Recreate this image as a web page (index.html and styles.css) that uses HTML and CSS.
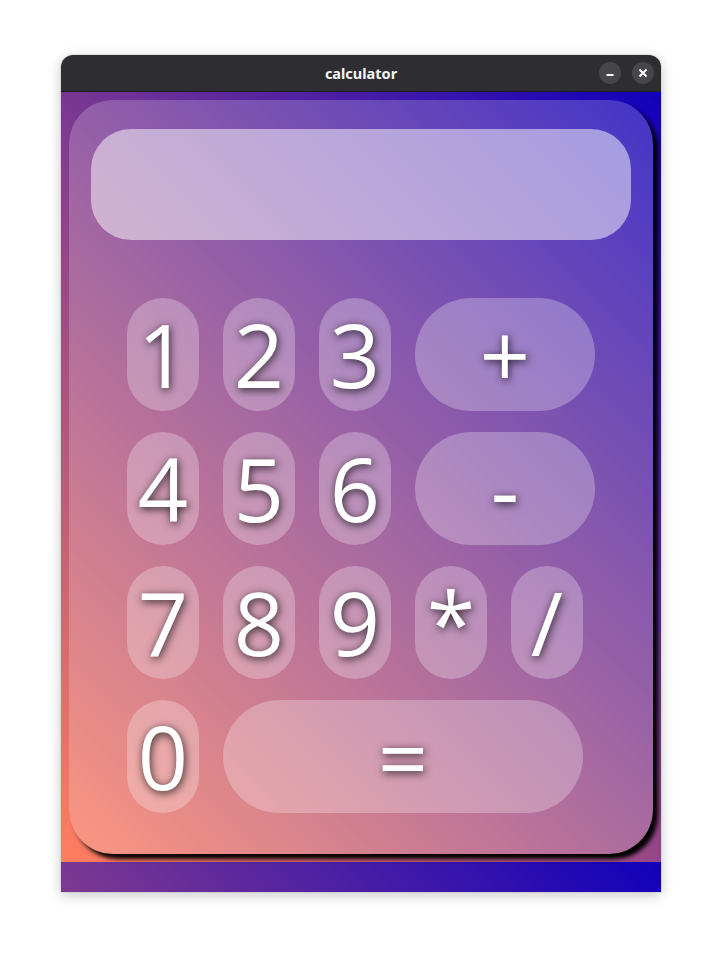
FILE: index.html
```html
<!DOCTYPE html>
<html>
<head>
<meta charset="utf-8">
<link rel="stylesheet" href="styles.css">
</head>
<body>
<div class="desk">
  <div class="window">
    <div class="titlebar">
      <span class="title">calculator</span>
      <div class="controls">
        <span class="ctl"><svg width="22" height="22" viewBox="0 0 22 22"><rect x="7.5" y="12" width="7" height="2" fill="#fff"/></svg></span>
        <span class="ctl"><svg width="22" height="22" viewBox="0 0 22 22"><path d="M7.5 7.5 L14.5 14.5 M14.5 7.5 L7.5 14.5" stroke="#fff" stroke-width="2"/></svg></span>
      </div>
    </div>
    <div class="viewport">
      <div class="card">
        <div class="display"></div>
        <div class="keys">
          <div class="row">
            <button class="key">1</button>
            <button class="key">2</button>
            <button class="key">3</button>
            <button class="key wide">+</button>
          </div>
          <div class="row">
            <button class="key">4</button>
            <button class="key">5</button>
            <button class="key">6</button>
            <button class="key wide">-</button>
          </div>
          <div class="row">
            <button class="key">7</button>
            <button class="key">8</button>
            <button class="key">9</button>
            <button class="key">*</button>
            <button class="key">/</button>
          </div>
          <div class="row">
            <button class="key">0</button>
            <button class="key equals">=</button>
          </div>
        </div>
      </div>
    </div>
  </div>
</div>
</body>
</html>
```

FILE: styles.css
```css
html, body {
  margin: 0;
  padding: 0;
  background: #ffffff;
}

.desk {
  padding: 55px 61px 67px 61px;
}

.window {
  width: 600px;
  border-radius: 12px 12px 0 0;
  overflow: hidden;
  box-shadow: 0 3px 14px rgba(0, 0, 0, 0.22), 0 0 0 1px rgba(0, 0, 0, 0.06);
}

.titlebar {
  height: 36px;
  background: #2e2e32;
  border-bottom: 1px solid #1f1f22;
  display: flex;
  align-items: center;
  justify-content: center;
  position: relative;
}

.title {
  font-family: "Noto Sans", "Open Sans", sans-serif;
  font-weight: 700;
  font-size: 14.5px;
  color: #f6f6f6;
}

.controls {
  position: absolute;
  right: 7px;
  top: 7px;
  display: flex;
  gap: 11px;
}

.ctl {
  width: 22px;
  height: 22px;
  border-radius: 50%;
  background: #46464b;
  display: flex;
}

.viewport {
  height: 800px;
  background: linear-gradient(45deg, #ff7e5f, #1100bb) 0 0 / 600px 770px repeat;
  padding-top: 8px;
  box-sizing: border-box;
}

.card {
  margin: 0 8px;
  height: 754px;
  box-sizing: border-box;
  border-radius: 44px;
  background: rgba(255, 255, 255, 0.2);
  box-shadow: 5px 5px 4px #000;
  padding: 29px 22px;
}

.display {
  height: 111px;
  border-radius: 40px;
  background: rgba(255, 255, 255, 0.5);
}

.keys {
  margin-top: 58px;
  padding-left: 36px;
  display: flex;
  flex-direction: column;
  gap: 21px;
}

.row {
  display: flex;
  gap: 24px;
}

.key {
  width: 72px;
  height: 113px;
  border: none;
  padding: 0;
  margin: 0;
  border-radius: 999px;
  background: rgba(255, 255, 255, 0.27);
  color: #ffffff;
  font-family: "Open Sans", sans-serif;
  font-size: 88px;
  line-height: 113px;
  text-shadow: 1px 2px 8px rgba(0, 0, 0, 0.8);
  display: flex;
  align-items: center;
  justify-content: center;
}

.wide {
  width: 180px;
}

.equals {
  width: 360px;
}
```
